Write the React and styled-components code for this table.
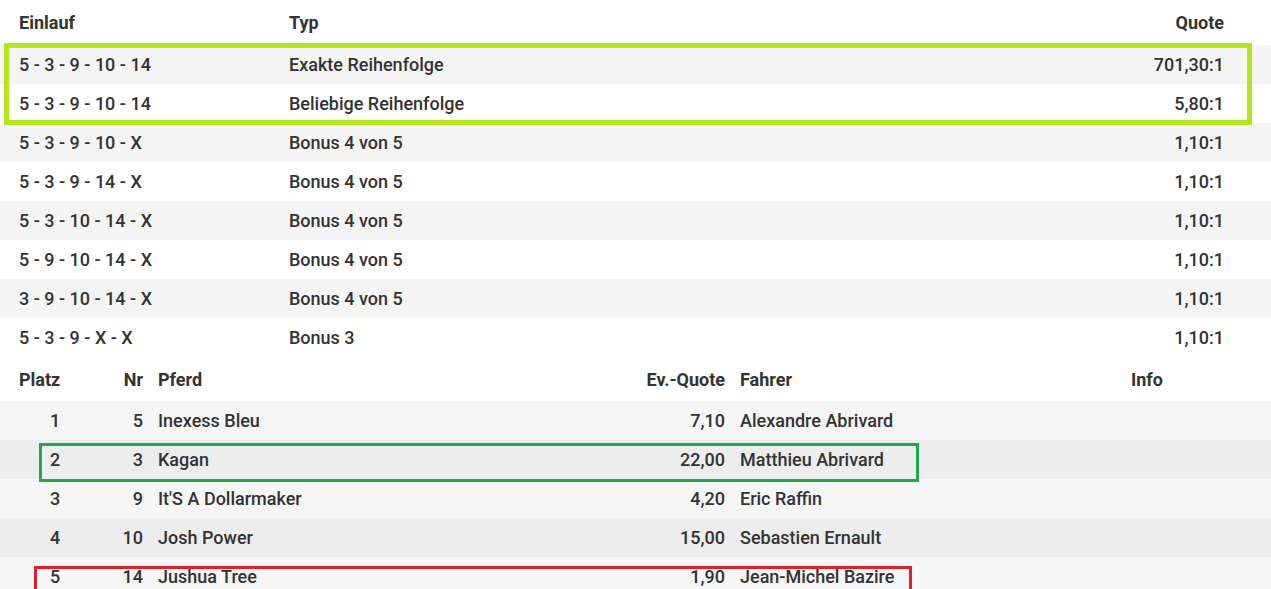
import React from 'react'
import styled, { createGlobalStyle } from 'styled-components'

const GlobalStyle = createGlobalStyle`
  body {
    margin: 0;
    background: #fff;
    font-family: Roboto, "Liberation Sans", Arial, sans-serif;
    color: #333;
  }
`

const Page = styled.div`
  position: relative;
  width: 1271px;
  overflow: hidden;
  height: 589px;
`

const ResultTable = styled.div`
  display: flex;
  flex-direction: column;
`

const ResultRow = styled.div`
  display: grid;
  grid-template-columns: 270px 1fr 300px;
  align-items: center;
  height: ${props => (props.head ? '45px' : '39px')};
  padding: 0 47px 0 19px;
  background: ${props => (props.shade ? '#f5f5f5' : '#fff')};
  font-size: 18px;
  font-weight: ${props => (props.head ? 700 : 500)};
`

const Cell = styled.div`
  white-space: nowrap;
  text-align: ${props => props.align || 'left'};
`

const HorseTable = styled.div`
  display: flex;
  flex-direction: column;
`

const HorseRow = styled.div`
  display: grid;
  grid-template-columns: 72px 37px 400px 152px 376px 1fr;
  column-gap: 15px;
  align-items: center;
  height: ${props => (props.head ? '44px' : '39px')};
  padding: 0 0 0 19px;
  background: ${props => props.bg || '#fff'};
  font-size: 18px;
  font-weight: ${props => (props.head ? 700 : 500)};
`

const Mark = styled.div`
  position: absolute;
  box-sizing: border-box;
  pointer-events: none;
  left: ${props => props.x}px;
  top: ${props => props.y}px;
  width: ${props => props.w}px;
  height: ${props => props.h}px;
  border: ${props => props.size}px solid ${props => props.color};
`

const results = [
  ['5 - 3 - 9 - 10 - 14', 'Exakte Reihenfolge', '701,30:1'],
  ['5 - 3 - 9 - 10 - 14', 'Beliebige Reihenfolge', '5,80:1'],
  ['5 - 3 - 9 - 10 - X', 'Bonus 4 von 5', '1,10:1'],
  ['5 - 3 - 9 - 14 - X', 'Bonus 4 von 5', '1,10:1'],
  ['5 - 3 - 10 - 14 - X', 'Bonus 4 von 5', '1,10:1'],
  ['5 - 9 - 10 - 14 - X', 'Bonus 4 von 5', '1,10:1'],
  ['3 - 9 - 10 - 14 - X', 'Bonus 4 von 5', '1,10:1'],
  ['5 - 3 - 9 - X - X', 'Bonus 3', '1,10:1'],
]

const horses = [
  ['1', '5', 'Inexess Bleu', '7,10', 'Alexandre Abrivard'],
  ['2', '3', 'Kagan', '22,00', 'Matthieu Abrivard'],
  ['3', '9', "It'S A Dollarmaker", '4,20', 'Eric Raffin'],
  ['4', '10', 'Josh Power', '15,00', 'Sebastien Ernault'],
  ['5', '14', 'Jushua Tree', '1,90', 'Jean-Michel Bazire'],
]

const App = () => (
  <Page>
    <GlobalStyle />
    <ResultTable>
      <ResultRow head>
        <Cell>Einlauf</Cell>
        <Cell>Typ</Cell>
        <Cell align="right">Quote</Cell>
      </ResultRow>
      {results.map((r, i) => (
        <ResultRow key={i} shade={i % 2 === 0}>
          <Cell>{r[0]}</Cell>
          <Cell>{r[1]}</Cell>
          <Cell align="right">{r[2]}</Cell>
        </ResultRow>
      ))}
    </ResultTable>
    <HorseTable>
      <HorseRow head>
        <Cell>Platz</Cell>
        <Cell align="right">Nr</Cell>
        <Cell>Pferd</Cell>
        <Cell align="right">Ev.-Quote</Cell>
        <Cell>Fahrer</Cell>
        <Cell>Info</Cell>
      </HorseRow>
      {horses.map((h, i) => (
        <HorseRow key={i} bg={i % 2 === 0 ? '#f6f6f6' : '#ededed'}>
          <Cell align="center">{h[0]}</Cell>
          <Cell align="right">{h[1]}</Cell>
          <Cell>{h[2]}</Cell>
          <Cell align="right">{h[3]}</Cell>
          <Cell>{h[4]}</Cell>
          <Cell />
        </HorseRow>
      ))}
    </HorseTable>
    <Mark x={4} y={43} w={1248} h={82} size={5} color="#b5e61d" />
    <Mark x={39} y={443} w={880} h={39} size={3} color="#22a84a" />
    <Mark x={34} y={566} w={878} h={28} size={3} color="#e01f26" />
  </Page>
)

export default App
